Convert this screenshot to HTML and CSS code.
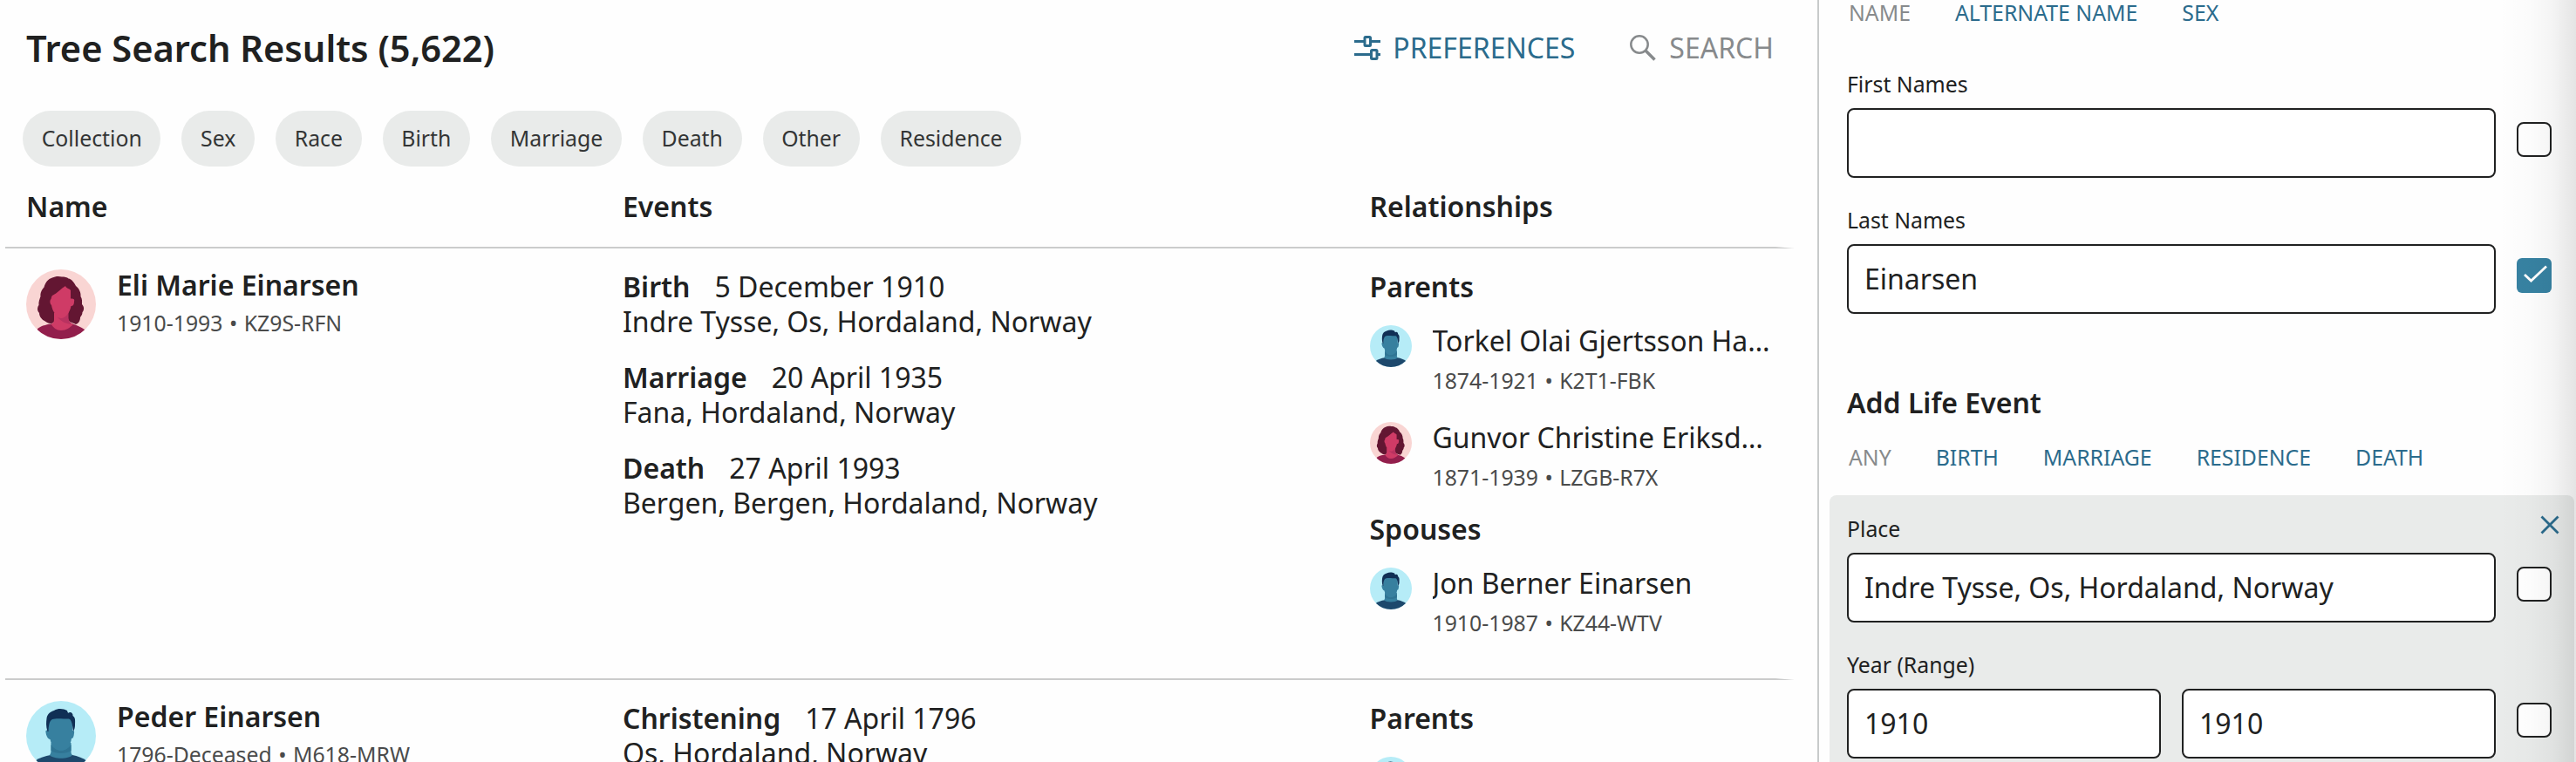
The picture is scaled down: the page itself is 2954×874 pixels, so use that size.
FILE: index.html
```html
<!DOCTYPE html>
<html lang="en">
<head>
    <meta charset="UTF-8">
    <meta name="viewport" content="width=device-width, initial-scale=1.0">
    <title>Tree Search Results</title>
    <link rel="stylesheet" href="styles.css">
</head>
<body>
    <!-- avatars used in the table -->
    <svg class="defs" width="0" height="0">
        <clipPath id="round"><circle cx="40" cy="40" r="40"/></clipPath>
        <symbol id="female" viewBox="0 0 80 80">
            <g clip-path="url(#round)">
                <rect width="80" height="80" fill="#f9d5d3"/>
                <path fill="#631632" d="M30 9.500C33 8 37 7.500 41 8.500C44 8.500 47 9 48.500 10.500C52 11 55 15 57 19C61 22 63 27 62.500 31C64.500 34 64 37 64 40C67 43 66.500 47 64.500 49C64.500 52 63 53 62 55C62 59 60 62 57 63C53 61 50 61 47 57L33 57C33 60 31 62 28 62C25 62 23 60 21 59C17 57 15 53 15 50C12 47 13 43 14.500 41C14 37 15.500 34 16.500 31C16 27 18 23 20.500 20.500C22 15 25 11 30 9.500Z"/>
                <path fill="#921e4c" d="M13 68C18 64 25 63 31 62H52C58 64 63 66 67 69V80H13Z"/>
                <path fill="#cf3b66" d="M32 50V58C32 61 30 62 28.500 62.500C31 67 35 70 40 70C46 70 50 67 54 63C50 61 48 59 48 55V48Z"/>
                <path fill="#b93260" d="M36 55C41 57 46 54 48.500 48V56C49 60 51 61 54 63C47 63 40 60 36 55Z"/>
                <path fill="#cf3b66" d="M45 19C46 22 50 22 51 24L51 33.500C54 33 56 34 55 37C55 40 54 42 51.500 42C50 50 45 56 40 56C35 55 30 48 29 41C27 39 27 35 28.500 34C29 32 29 31 30 30C36 27 40 22 45 19Z"/>
            </g>
        </symbol>
        <symbol id="male" viewBox="0 0 80 80">
            <g clip-path="url(#round)">
                <rect width="80" height="80" fill="#b6ecf7"/>
                <path fill="#1d486c" d="M10 69C15 65 22 63 28 62H53C59 63 64 65 70 69V80H10Z"/>
                <path fill="#37809f" d="M28.500 48V57C28.500 60 27.500 61 27 62C31 67 49 67 53 62C51.500 61 51.500 59 51.500 57V48Z"/>
                <path fill="#2f7493" d="M28.500 50C34 59 46 59 51.500 50V57C46 61 34 61 28.500 57Z"/>
                <path fill="#37809f" d="M26 20H53V34C55 33.500 55.500 35 55 37C54.500 41 54 43 52 43C51 51 46 57 40 57C34 57 29 52 27.500 44C25 44 23 40 22.500 36C22 34 23 33 25 34Z"/>
                <path fill="#102f55" d="M24.500 35C22.500 29 23 24 23.500 20C24 15 28 12 32 11C37 8 43 9 47 11C47.500 13 48 14 49 13.500C51 12 54 14 53.500 17C57 19 56 24 56 28C56 31 55 33 54 35C53 31 53.500 27 51.500 23C50 19 47 21 43 20.500C38 20 33 20 30 21C26 23 26 29 25.500 35Z"/>
            </g>
        </symbol>
    </svg>

    <div class="page">
        <main class="results">
            <div class="header">
                <h1>Tree Search Results (5,622)</h1>
                <div class="actions">
                    <a class="action">
                        <svg width="30" height="30" viewBox="0 0 30 30" fill="none" stroke="currentColor" stroke-width="3">
                            <path d="M0 7.500H11M19 7.500H30M0 22.500H18M27 22.500H30"/>
                            <rect x="12" y="2.500" width="6.500" height="10" rx="1"/>
                            <rect x="19.500" y="17.500" width="6.500" height="10" rx="1"/>
                        </svg>
                        PREFERENCES
                    </a>
                    <a class="action muted">
                        <svg width="30" height="30" viewBox="0 0 30 30" fill="none" stroke="currentColor" stroke-width="2.500">
                            <circle cx="11" cy="11" r="9.700"/>
                            <path d="M18 18L28.500 28.500" stroke-width="3.500"/>
                        </svg>
                        SEARCH
                    </a>
                </div>
            </div>

            <div class="chips">
                <span class="chip">Collection</span>
                <span class="chip">Sex</span>
                <span class="chip">Race</span>
                <span class="chip">Birth</span>
                <span class="chip">Marriage</span>
                <span class="chip">Death</span>
                <span class="chip">Other</span>
                <span class="chip">Residence</span>
            </div>

            <div class="table">
                <div class="row head">
                    <div class="cell">Name</div>
                    <div class="cell">Events</div>
                    <div class="cell last">Relationships</div>
                </div>

                <div class="row first">
                    <div class="cell">
                        <div class="person main">
                            <svg class="avatar"><use href="#female"/></svg>
                            <div class="info">
                                <div class="name">Eli Marie Einarsen</div>
                                <div class="sub">1910-1993 • KZ9S-RFN</div>
                            </div>
                        </div>
                    </div>
                    <div class="cell">
                        <div class="event"><b>Birth</b><span>5 December 1910</span><p>Indre Tysse, Os, Hordaland, Norway</p></div>
                        <div class="event"><b>Marriage</b><span>20 April 1935</span><p>Fana, Hordaland, Norway</p></div>
                        <div class="event"><b>Death</b><span>27 April 1993</span><p>Bergen, Bergen, Hordaland, Norway</p></div>
                    </div>
                    <div class="cell last">
                        <div class="group">
                            <h3>Parents</h3>
                            <div class="person">
                                <svg class="avatar"><use href="#male"/></svg>
                                <div class="info">
                                    <div class="name">Torkel Olai Gjertsson Ha…</div>
                                    <div class="sub">1874-1921 • K2T1-FBK</div>
                                </div>
                            </div>
                            <div class="person">
                                <svg class="avatar"><use href="#female"/></svg>
                                <div class="info">
                                    <div class="name">Gunvor Christine Eriksd…</div>
                                    <div class="sub">1871-1939 • LZGB-R7X</div>
                                </div>
                            </div>
                        </div>
                        <div class="group">
                            <h3>Spouses</h3>
                            <div class="person">
                                <svg class="avatar"><use href="#male"/></svg>
                                <div class="info">
                                    <div class="name">Jon Berner Einarsen</div>
                                    <div class="sub">1910-1987 • KZ44-WTV</div>
                                </div>
                            </div>
                        </div>
                    </div>
                </div>

                <div class="row">
                    <div class="cell">
                        <div class="person main">
                            <svg class="avatar"><use href="#male"/></svg>
                            <div class="info">
                                <div class="name">Peder Einarsen</div>
                                <div class="sub">1796-Deceased • M618-MRW</div>
                            </div>
                        </div>
                    </div>
                    <div class="cell">
                        <div class="event"><b>Christening</b><span>17 April 1796</span><p>Os, Hordaland, Norway</p></div>
                    </div>
                    <div class="cell last">
                        <div class="group">
                            <h3>Parents</h3>
                            <div class="person">
                                <svg class="avatar"><use href="#male"/></svg>
                            </div>
                        </div>
                    </div>
                </div>
            </div>
        </main>

        <aside class="sidebar">
            <div class="tabs">
                <a class="muted">NAME</a>
                <a>ALTERNATE NAME</a>
                <a>SEX</a>
            </div>
            <div class="field first-field">
                <label for="first">First Names</label>
                <div class="line">
                    <input type="text" id="first">
                    <span class="check"></span>
                </div>
            </div>
            <div class="field">
                <label for="last">Last Names</label>
                <div class="line">
                    <input type="text" id="last" value="Einarsen">
                    <span class="check on">
                        <svg width="40" height="40" viewBox="0 0 40 40" fill="none" stroke="#fff" stroke-width="2.800"><path d="M9 19L16.500 26L34 9.500"/></svg>
                    </span>
                </div>
            </div>

            <h2>Add Life Event</h2>
            <div class="tabs">
                <a class="muted">ANY</a>
                <a>BIRTH</a>
                <a>MARRIAGE</a>
                <a>RESIDENCE</a>
                <a>DEATH</a>
            </div>
            <div class="panel">
                <svg class="close" width="22" height="22" viewBox="0 0 22 22" fill="none" stroke="currentColor" stroke-width="2.800"><path d="M1.500 1.500L20.500 20.500M20.500 1.500L1.500 20.500"/></svg>
                <div class="field">
                    <label for="place">Place</label>
                    <div class="line">
                        <input type="text" id="place" value="Indre Tysse, Os, Hordaland, Norway">
                        <span class="check"></span>
                    </div>
                </div>
                <div class="field">
                    <label for="from">Year (Range)</label>
                    <div class="line">
                        <input type="text" id="from" value="1910">
                        <input type="text" id="to" value="1910">
                        <span class="check"></span>
                    </div>
                </div>
            </div>
            <div class="shade"></div>
        </aside>
    </div>
</body>
</html>
```
FILE: styles.css
```css
*{
    box-sizing: border-box;
}
body{
    margin: 0;
    background-color: #fefefe;
    color: #202121;
    font-family: "Noto Sans", "Open Sans", sans-serif;
    font-size: 32px;
}
h1,h2,h3,p{
    margin: 0;
}
svg{
    display: block;
    flex: none;
}
.defs{
    position: absolute;
}
.page{
    display: flex;
    height: 874px;
    overflow: hidden;
}
.results{
    width: 2084px;
    padding-top: 24px;
}

/* title bar */
.header{
    display: flex;
    justify-content: space-between;
    align-items: center;
    height: 61px;
    padding: 0 50px 0 30px;
}
h1{
    font-size: 41.6px;
    line-height: 60px;
    font-weight: 600;
}
.actions{
    display: flex;
    gap: 63px;
    padding-top: 1px;
}
.action{
    display: flex;
    align-items: center;
    gap: 14px;
    line-height: 44px;
    color: #2b6b8c;
}
.action.muted{
    gap: 15px;
}
.action.muted,.tabs .muted{
    color: #878a8c;
}

.chips{
    display: flex;
    gap: 24px;
    margin-top: 42px;
    padding-left: 26px;
}
.chip{
    height: 64px;
    padding: 0 21.7px;
    border-radius: 32px;
    background-color: #e9ebea;
    color: #333535;
    line-height: 63px;
}
.chip,.sub,.tabs,label{
    font-size: 24.8px;
}

/* results table */
.table{
    width: 2052px;
    margin-left: 6px;
}
.row{
    display: grid;
    grid-template-columns: 684px 856.5px 511.5px;
}
.cell{
    padding: 20px 0 0 24px;
    border-bottom: 2px solid #cbcccc;
}
.head .cell{
    height: 94px;
    padding-top: 24px;
    line-height: 44px;
    font-weight: 600;
}
.first .cell{
    height: 495px;
}
.cell.last{
    border-right: 22px solid transparent;
}
.person{
    display: flex;
    gap: 24px;
}
.avatar{
    width: 48px;
    height: 48px;
    margin-top: 4px;
}
.main .avatar{
    width: 80px;
    height: 80px;
}
.info{
    overflow: hidden;
    white-space: nowrap;
}
.name{
    line-height: 43px;
}
.sub{
    color: #4a4b4b;
    line-height: 49px;
    word-spacing: 1px;
}
.main .name{
    font-weight: 600;
}
.main .sub{
    line-height: 45px;
}
.event{
    margin: 4px 0 20px;
    padding-bottom: 4px;
    line-height: 40px;
}
.event + .event{
    margin-top: 0;
}
.event b{
    font-weight: 600;
    margin-right: 28px;
}
.group{
    padding-top: 4px;
}
.group + .group{
    padding-top: 15px;
}
.group h3{
    margin-bottom: 20px;
    font-size: 32px;
    line-height: 40px;
    font-weight: 600;
}
.person + .person{
    margin-top: 19px;
}

/* search form */
.sidebar{
    position: relative;
    width: 870px;
    border-left: 2px solid #c8caca;
}
.tabs{
    display: flex;
    gap: 51px;
    padding-left: 34px;
    color: #2b6b8c;
    line-height: 29px;
    height: 28px;
}
.field{
    margin-top: 30px;
    padding-left: 32px;
}
.first-field{
    margin-top: 50px;
}
label{
    display: block;
    margin-bottom: 10px;
    line-height: 36px;
}
.line{
    display: flex;
    align-items: center;
    gap: 24px;
    width: 808px;
    height: 80px;
}
input{
    flex: 1;
    min-width: 0;
    height: 80px;
    padding: 0 18px 2px;
    border: 2px solid #202121;
    border-radius: 8px;
    background-color: #fff;
    color: #202121;
    font-family: inherit;
    font-size: 32px;
}
.check{
    flex: none;
    width: 40px;
    height: 40px;
    margin-top: -8px;
    border: 2px solid #202121;
    border-radius: 8px;
    background-color: #fff;
}
.check.on{
    border: 0;
    background-color: #3782a2;
    border-radius: 6px;
}
h2{
    margin: 80px 0 26px 32px;
    font-size: 32px;
    line-height: 44px;
    font-weight: 600;
}
.panel{
    position: relative;
    height: 330px;
    margin: 30px 2px 0 12px;
    padding-top: 20px;
    border-radius: 8px;
    background-color: #e9ebea;
}
.panel .field{
    padding-left: 20px;
}
.panel .field:first-of-type{
    margin-top: 0;
}
.close{
    position: absolute;
    top: 23px;
    right: 17px;
    color: #2b6b8c;
}
/* soft shadow over the right edge */
.shade{
    position: absolute;
    top: 0;
    right: 0;
    width: 90px;
    height: 874px;
    background: linear-gradient(to right, rgba(0,0,0,0), rgba(0,0,0,0.012) 40%, rgba(0,0,0,0.04) 70%, rgba(0,0,0,0.1));
    pointer-events: none;
}
```
